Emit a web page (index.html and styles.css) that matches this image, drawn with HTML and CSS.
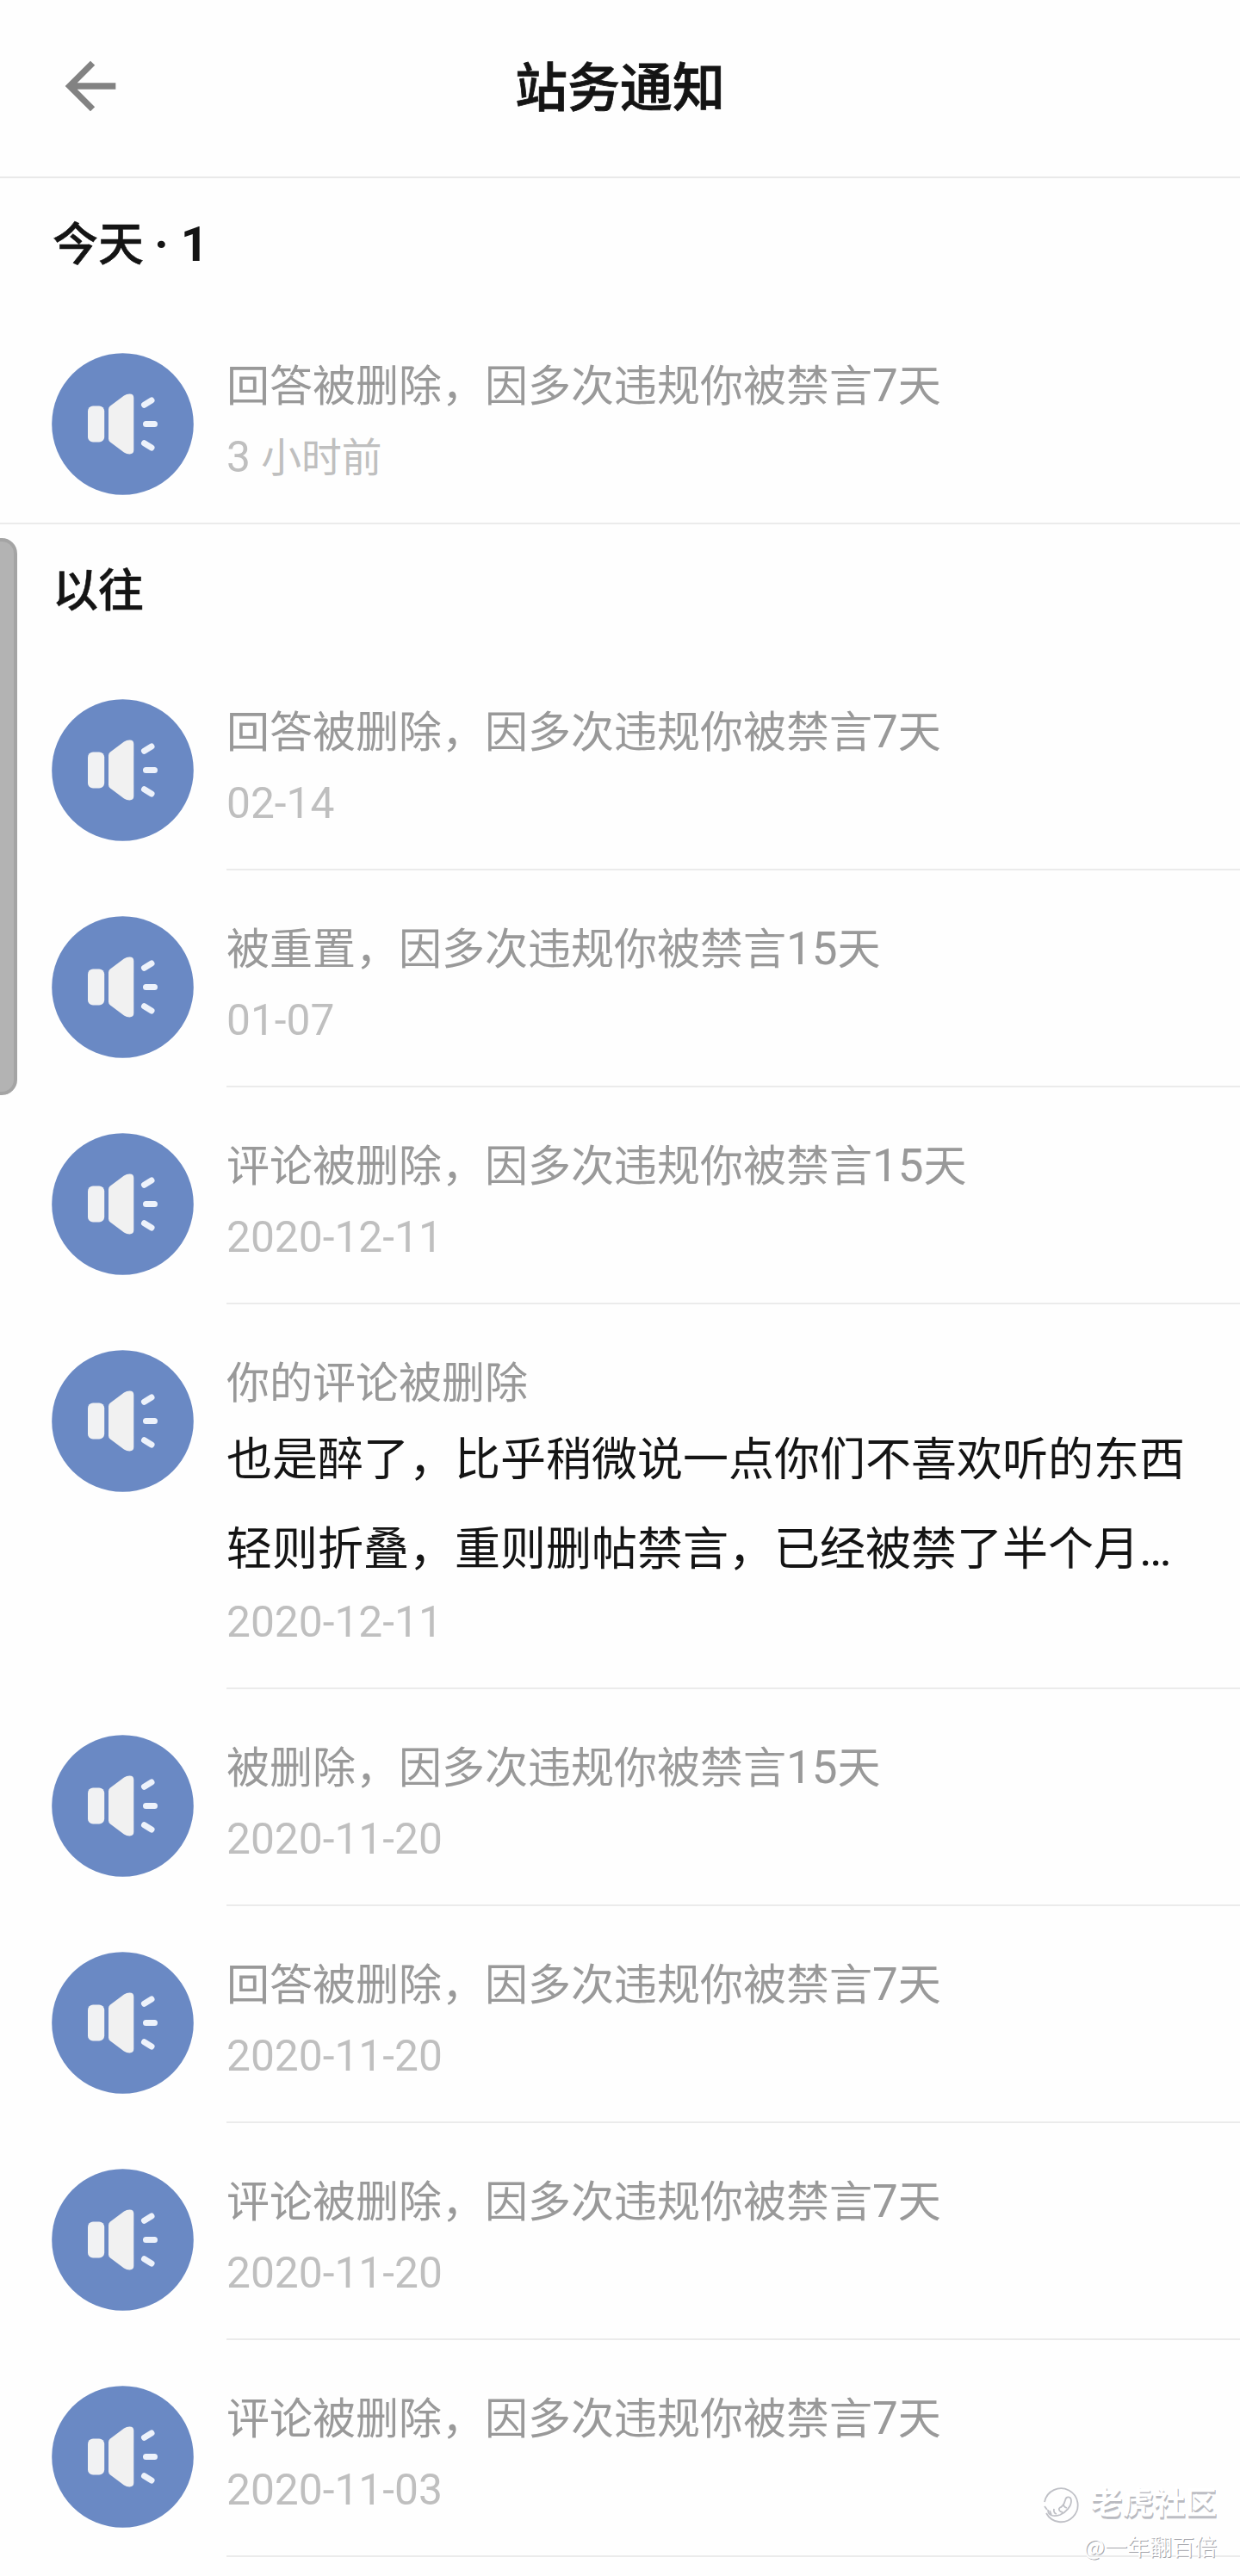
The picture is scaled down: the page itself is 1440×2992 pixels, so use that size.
FILE: index.html
```html
<!DOCTYPE html>
<html lang="zh-CN">
<head>
<meta charset="utf-8">
<title>站务通知</title>
<link rel="stylesheet" href="styles.css">
</head>
<body>
<svg class="sprite" width="0" height="0" aria-hidden="true">
  <symbol id="speaker" viewBox="0 0 165 165">
    <circle cx="82.5" cy="82.5" r="82.3" fill="#6a89c4"/>
    <rect x="42" y="61.5" width="19.2" height="42" rx="6" fill="#f1f2f3"/>
    <path d="M66 65.500Q66 63 68 61.500L84 49.500Q87 47.600 90.500 47.600Q95.300 47.600 95.300 52V113Q95.300 117.400 90.500 117.400Q87 117.400 84 115.500L68 103.500Q66 102 66 99.500Z" fill="#f1f1f1"/>
    <path d="M107.500 60.200L116 55M109.500 82.500H119.500M107.500 104.800L116 110" fill="none" stroke="#edf2fb" stroke-width="7" stroke-linecap="round"/>
  </symbol>
</svg>
<div class="screen">
  <header class="topbar">
    <svg class="back" viewBox="0 0 24 24"><path d="M20 11H7.830l5.590-5.590L12 4l-8 8 8 8 1.410-1.410L7.830 13H20v-2z"/></svg>
    <h1 class="title">站务通知</h1>
    <span class="topbar-end"></span>
  </header>

  <section class="group">
    <h2 class="group-title">今天 <span class="num">· 1</span></h2>
    <article class="item">
      <svg class="avatar"><use href="#speaker"/></svg>
      <div class="body"><p class="head">回答被删除，因多次违规你被禁言<span class="num">7</span>天</p><p class="date"><span class="num">3 </span>小时前</p></div>
    </article>
  </section>

  <section class="group">
    <h2 class="group-title">以往</h2>
    <article class="item">
      <svg class="avatar"><use href="#speaker"/></svg>
      <div class="body"><p class="head">回答被删除，因多次违规你被禁言<span class="num">7</span>天</p><p class="date"><span class="num">02-14</span></p></div>
    </article>
    <article class="item">
      <svg class="avatar"><use href="#speaker"/></svg>
      <div class="body"><p class="head">被重置，因多次违规你被禁言<span class="num">15</span>天</p><p class="date"><span class="num">01-07</span></p></div>
    </article>
    <article class="item">
      <svg class="avatar"><use href="#speaker"/></svg>
      <div class="body"><p class="head">评论被删除，因多次违规你被禁言<span class="num">15</span>天</p><p class="date"><span class="num">2020-12-11</span></p></div>
    </article>
    <article class="item">
      <svg class="avatar"><use href="#speaker"/></svg>
      <div class="body"><p class="head">你的评论被删除</p><p class="excerpt">也是醉了，比乎稍微说一点你们不喜欢听的东西<br>轻则折叠，重则删帖禁言，已经被禁了半个月<span class="num">…</span></p><p class="date"><span class="num">2020-12-11</span></p></div>
    </article>
    <article class="item">
      <svg class="avatar"><use href="#speaker"/></svg>
      <div class="body"><p class="head">被删除，因多次违规你被禁言<span class="num">15</span>天</p><p class="date"><span class="num">2020-11-20</span></p></div>
    </article>
    <article class="item">
      <svg class="avatar"><use href="#speaker"/></svg>
      <div class="body"><p class="head">回答被删除，因多次违规你被禁言<span class="num">7</span>天</p><p class="date"><span class="num">2020-11-20</span></p></div>
    </article>
    <article class="item">
      <svg class="avatar"><use href="#speaker"/></svg>
      <div class="body"><p class="head">评论被删除，因多次违规你被禁言<span class="num">7</span>天</p><p class="date"><span class="num">2020-11-20</span></p></div>
    </article>
    <article class="item">
      <svg class="avatar"><use href="#speaker"/></svg>
      <div class="body"><p class="head">评论被删除，因多次违规你被禁言<span class="num">7</span>天</p><p class="date"><span class="num">2020-11-03</span></p></div>
    </article>
  </section>

  <div class="edge-handle"></div>
  <div class="watermark">
    <div class="brand">
      <svg class="brand-logo" viewBox="0 0 44 44" fill="none" stroke="#bfc0c6"><path d="M3 19a19.500 19.500 0 1 1 2 13" stroke-width="1.800"/><path d="M3 24l3 4M7 28c0 8 8 8 14 6 7-3 13-10 13-16 0-6-6-6-7-1-1 4-4 8-7 9M9 29l2 5M14 27q-1 5 3 6M20 26q-1 4 4 5M25 21q0 4 4 5" stroke-width="1.800"/></svg>
      <span>老虎社区</span>
    </div>
    <div class="author">@一年翻百倍</div>
  </div>
</div>
</body>
</html>
```
FILE: styles.css
```css
* { box-sizing: border-box; margin: 0; padding: 0; }
body {
  background: #fefefe;
  color: #141414;
  font-family: "Noto Sans CJK SC", sans-serif;
}
.sprite { position: absolute; }
.screen {
  position: relative;
  width: 1440px;
  height: 2992px;
  overflow: hidden;
}
.num { font-family: Roboto, "Noto Sans CJK SC", sans-serif; }

.topbar {
  display: flex;
  align-items: center;
  justify-content: space-between;
  height: 207px;
  padding: 0 61px 6px;
  border-bottom: 2px solid #e9e9e9;
}
.back, .topbar-end { width: 88px; height: 88px; }
.back { fill: #828282; }
.title { height: 88px; font-size: 61px; line-height: 84px; font-weight: 500; -webkit-text-stroke: 0.8px #141414; }

.group-title {
  height: 150px;
  padding-left: 61px;
  font-size: 53px;
  line-height: 147px;
  font-weight: 500;
  -webkit-text-stroke: 0.5px #141414;
}
.group-title .num { font-size: 56px; font-weight: 700; -webkit-text-stroke: 0; }

.item {
  display: flex;
  gap: 38px;
  padding-left: 60px;
}
.avatar { flex: none; width: 165px; height: 165px; margin-top: 53px; }
.body {
  flex: 1;
  min-height: 252px;
  padding: 51px 0 37px;
  border-bottom: 2px solid #ebebeb;
  white-space: nowrap;
}
.group:first-of-type { border-bottom: 2px solid #ebebeb; }
.group:first-of-type .body { min-height: 250px; padding-bottom: 35px; border-bottom: 0; }
.head { height: 73px; font-size: 50px; line-height: 73px; color: #999; }
.head .num { font-size: 53px; }
.excerpt { height: 195px; font-size: 53px; line-height: 104px; }
.excerpt .num { font-size: 56px; }
.date { height: 89px; font-size: 46.800px; line-height: 93px; color: #bfbfbf; }
.date .num { font-size: 49.700px; }

.edge-handle {
  position: absolute;
  left: -20px;
  top: 625px;
  width: 40px;
  height: 647px;
  border: 4px solid #a4a4a4;
  border-radius: 18px;
  background: #b3b3b3;
}
.watermark {
  position: absolute;
  right: 27px;
  top: 2879px;
  display: flex;
  flex-direction: column;
  align-items: flex-end;
  color: #fff;
}
.brand { display: flex; align-items: center; gap: 13px; height: 56px; font-size: 36.500px; line-height: 52px; font-weight: 700; text-shadow: 1px 2px 0 #b9bac0, 1px 3px 0 #c3c4ca; }
.brand span { height: 56px; }
.brand-logo { width: 44px; height: 44px; margin-top: 3px; }
.author { height: 44px; font-size: 26px; line-height: 43px; text-shadow: 1px 1px 0 #a4a5ab; }
```
